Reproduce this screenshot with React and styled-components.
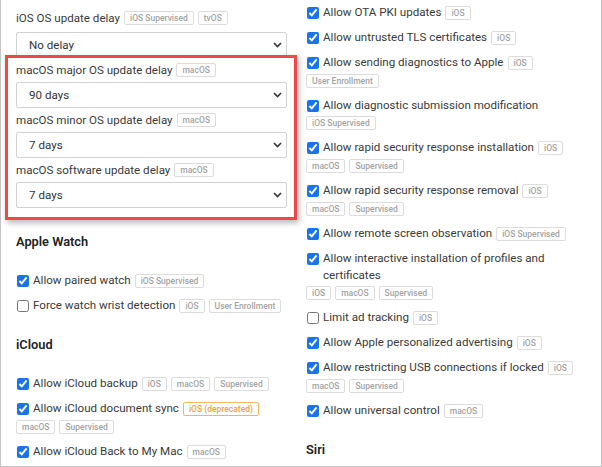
import React from 'react'
import styled, { createGlobalStyle, css } from 'styled-components'

const GlobalStyle = createGlobalStyle`
    html, body {
        margin: 0;
        padding: 0;
        background: #fff;
    }
    body {
        font-family: Roboto, "Liberation Sans", Arial, sans-serif;
        color: #3a3a3a;
    }
    * {
        box-sizing: border-box;
    }
`

const delayFields = [
    { label: 'macOS major OS update delay', tags: ['macOS'], value: '90 days' },
    { label: 'macOS minor OS update delay', tags: ['macOS'], value: '7 days' },
    { label: 'macOS software update delay', tags: ['macOS'], value: '7 days' },
]

const watchItems = [
    { label: 'Allow paired watch', checked: true, tags: ['iOS Supervised'] },
    { label: 'Force watch wrist detection', checked: false, tags: ['iOS', 'User Enrollment'] },
]

const icloudItems = [
    { label: 'Allow iCloud backup', checked: true, tags: ['iOS', 'macOS', 'Supervised'] },
    { label: 'Allow iCloud document sync', checked: true, tags: [{ text: 'iOS (deprecated)', warn: true }, 'macOS', 'Supervised'] },
    { label: 'Allow iCloud Back to My Mac', checked: true, tags: ['macOS'] },
]

const rightItems = [
    { label: 'Allow OTA PKI updates', checked: true, tags: ['iOS'] },
    { label: 'Allow untrusted TLS certificates', checked: true, tags: ['iOS'] },
    { label: 'Allow sending diagnostics to Apple', checked: true, tags: ['iOS', 'User Enrollment'] },
    { label: 'Allow diagnostic submission modification', checked: true, tags: ['iOS Supervised'] },
    { label: 'Allow rapid security response installation', checked: true, tags: ['iOS', 'macOS', 'Supervised'] },
    { label: 'Allow rapid security response removal', checked: true, tags: ['iOS', 'macOS', 'Supervised'] },
    { label: 'Allow remote screen observation', checked: true, tags: ['iOS Supervised'] },
    { label: 'Allow interactive installation of profiles and certificates', checked: true, tags: ['iOS', 'macOS', 'Supervised'] },
    { label: 'Limit ad tracking', checked: false, tags: ['iOS'] },
    { label: 'Allow Apple personalized advertising', checked: true, tags: ['iOS'] },
    { label: 'Allow restricting USB connections if locked', checked: true, tags: ['iOS', 'macOS', 'Supervised'] },
    { label: 'Allow universal control', checked: true, tags: ['macOS'] },
]

const Tags = ({ tags }) => (
    <>
        {tags.map((t) => {
            const tag = typeof t === 'string' ? { text: t } : t
            return <Badge key={tag.text} warn={tag.warn}>{tag.text}</Badge>
        })}
    </>
)

const Chevron = () => (
    <ChevronIcon width="9" height="6" viewBox="0 0 9 6">
        <path d="M1 1l3.5 3.5L8 1" fill="none" stroke="#333" strokeWidth="1.6" />
    </ChevronIcon>
)

const SelectField = ({ label, tags, value, first }) => (
    <>
        <FieldLabel>
            <LabelText>{label}</LabelText>
            <Tags tags={tags} />
        </FieldLabel>
        <SelectWrap first={first}>
            <Select defaultValue={value}>
                <option>{value}</option>
            </Select>
            <Chevron />
        </SelectWrap>
    </>
)

const CheckItem = ({ label, checked, tags }) => (
    <Item>
        <CheckLabel>
            <Checkbox type="checkbox" defaultChecked={checked} />
            <span>{label}</span>
        </CheckLabel>
        <Tags tags={tags} />
    </Item>
)

export default function App() {
    return (
        <>
            <GlobalStyle />
            <Frame>
                <Column left>
                    <SelectField first label="iOS OS update delay" tags={['iOS Supervised', 'tvOS']} value="No delay" />
                    <Highlight>
                        {delayFields.map((f) => <SelectField key={f.label} {...f} />)}
                    </Highlight>

                    <SectionTitle>Apple Watch</SectionTitle>
                    {watchItems.map((i) => <CheckItem key={i.label} {...i} />)}

                    <SectionTitle>iCloud</SectionTitle>
                    {icloudItems.map((i) => <CheckItem key={i.label} {...i} />)}
                </Column>

                <Column>
                    {rightItems.map((i) => <CheckItem key={i.label} {...i} />)}
                    <SectionTitle>Siri</SectionTitle>
                </Column>
            </Frame>
        </>
    )
}

const Frame = styled.div`
    width: 602px;
    height: 467px;
    overflow: hidden;
    border: 1px solid #c4c4c4;
    border-top: none;
    padding-left: 15px;
    display: grid;
    grid-template-columns: 271px 284px;
    column-gap: 19px;
    align-items: start;
    background: #fff;
`

const Column = styled.div`
    display: flex;
    flex-direction: column;
    padding-top: ${props => props.left ? '6px' : '4px'};
`

const FieldLabel = styled.div`
    display: flex;
    align-items: center;
    height: 24px;
    font-size: 11.6px;
    color: #3a3a3a;
`

const LabelText = styled.span`
    margin-right: 4px;
`

const SelectWrap = styled.div`
    position: relative;
    height: 26px;
    margin-top: ${props => props.first ? '2px' : '0'};
`

const Select = styled.select`
    appearance: none;
    width: 100%;
    height: 100%;
    border: 1px solid #d2d2d2;
    border-radius: 2px;
    background: #fff;
    padding: 0 12px;
    font-family: Roboto, "Liberation Sans", Arial, sans-serif;
    font-size: 11.6px;
    color: #333;
    outline: none;
`

const ChevronIcon = styled.svg`
    position: absolute;
    right: 5px;
    top: 50%;
    transform: translateY(-50%);
    pointer-events: none;
`

const Highlight = styled.div`
    position: relative;
    margin: -3px -10px -1px -11px;
    padding: 0 7px 9px 8px;
    border: 3px solid #ef4848;
    box-shadow: 2px 3px 6px rgba(0, 0, 0, 0.28);
`

const SectionTitle = styled.h4`
    margin: 14px 0 22px;
    font-size: 12.8px;
    line-height: 17px;
    font-weight: 600;
    color: #222;
`

const Item = styled.div`
    font-size: 11.6px;
    line-height: 17px;
    margin-bottom: 7px;
    color: #3a3a3a;
`

const CheckLabel = styled.label`
    display: inline-flex;
    align-items: flex-start;
    vertical-align: top;
    margin-right: 4px;
`

const Checkbox = styled.input`
    width: 12px;
    height: 12px;
    margin: 2.5px 4px 0 1px;
    flex-shrink: 0;
    accent-color: #1a73e8;
`

const Badge = styled.span`
    display: inline-block;
    vertical-align: top;
    margin: 2px 4px 2px 0;
    padding: 0 5px;
    font-size: 8.5px;
    line-height: 12px;
    font-weight: 500;
    color: #a3a3a3;
    border: 1px solid #dcdcdc;
    border-radius: 2px;
    white-space: nowrap;

    ${props => props.warn && css`
        color: #f0a23a;
        border-color: #f3b660;
    `}
`
